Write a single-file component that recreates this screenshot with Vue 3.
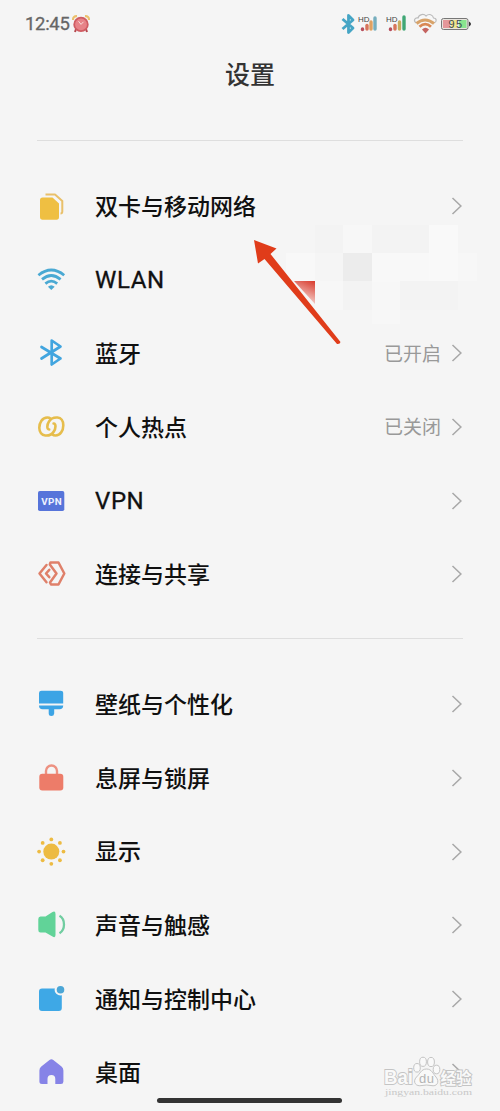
<script setup>
const groups = [
  [
    { icon: 'sim', label: '双卡与移动网络', arrow: true },
    { icon: 'wifi', label: 'WLAN', latin: true },
    { icon: 'bluetooth', label: '蓝牙', value: '已开启', arrow: true },
    { icon: 'hotspot', label: '个人热点', value: '已关闭', arrow: true },
    { icon: 'vpn', label: 'VPN', latin: true, arrow: true },
    { icon: 'share', label: '连接与共享', arrow: true },
  ],
  [
    { icon: 'brush', label: '壁纸与个性化', arrow: true },
    { icon: 'lock', label: '息屏与锁屏', arrow: true },
    { icon: 'sun', label: '显示', arrow: true },
    { icon: 'sound', label: '声音与触感', arrow: true },
    { icon: 'notice', label: '通知与控制中心', arrow: true },
    { icon: 'home', label: '桌面', arrow: true },
  ],
]
const dots = Array.from({ length: 8 }, (_, i) => ({
  x: 16.3 + 12.2 * Math.cos((i * Math.PI) / 4),
  y: 15.6 + 12.2 * Math.sin((i * Math.PI) / 4),
}))
</script>

<template>
  <div class="phone">
    <header class="status">
      <span class="time">12:45</span>
      <svg class="alarm" width="18" height="18" viewBox="0 0 18 18">
        <path d="M1 5 Q1 1 5 1.2 M17 5 Q17 1 13 1.2" stroke="#ecc06c" stroke-width="2.2" fill="none" />
        <path d="M4 14 L3 17 M14 14 L15 17" stroke="#b5484e" stroke-width="2" />
        <circle cx="9" cy="9.4" r="6.8" fill="#e78388" stroke="#cf5c62" stroke-width="1.8" />
        <path d="M6.5 6.2 L9 9.4 L11.5 6.8" stroke="#f8dcd8" stroke-width="1" fill="none" />
      </svg>
      <svg class="tray" width="136" height="24" viewBox="0 0 136 24">
        <path d="M2.5 7 L13 16 L8.5 20.5 V3.5 L13 8 L2.5 17" fill="none" stroke="#45a5c5" stroke-width="2.8" stroke-linejoin="round" />
        <g font-family="Liberation Sans, sans-serif" font-size="8" fill="#444">
          <text x="18" y="9.5" textLength="11.500" lengthAdjust="spacingAndGlyphs">HD</text>
          <text x="46" y="9.5" textLength="11.500" lengthAdjust="spacingAndGlyphs">HD</text>
        </g>
        <g stroke-width="3.400" stroke-linecap="round">
          <path d="M22.500 17.5 V17" stroke="#b84e5c" />
          <path d="M27 13.5 V17" stroke="#d8765b" />
          <path d="M31 10 V17" stroke="#e0a161" />
          <path d="M35 6 V17" stroke="#76aebe" />
          <path d="M50.500 17.5 V17" stroke="#b84e5c" />
          <path d="M55 13.5 V17" stroke="#d8765b" />
          <path d="M59.500 10 V17" stroke="#c9ac5d" />
          <path d="M64 5 V17" stroke="#40a775" />
        </g>
        <path d="M76 11 C73 8 75 5.500 78 6 C79 2 84 1.500 86 4 C89 1 93 3 93.500 6 C97 6 97 10 94 11" fill="#f7f7f7" stroke="#bbb" stroke-width="1.2" />
        <path d="M76.500 11.500 Q85 4.500 94 11.500" fill="none" stroke="#d8a36a" stroke-width="3" />
        <path d="M79.500 14.800 Q85.300 9.500 91 14.800" fill="none" stroke="#d98855" stroke-width="2.800" />
        <path d="M82 17.500 Q85.500 14 89 17.500 L85.500 21.500 Z" fill="#c46360" />
        <rect x="101.500" y="6.500" width="26.500" height="11" rx="2" fill="#e8e5df" stroke="#777" stroke-width="1" />
        <rect x="103" y="8" width="7" height="8" fill="#e4979a" />
        <rect x="111" y="8" width="6" height="8" fill="#f0e28a" />
        <rect x="119" y="8" width="7.500" height="8" fill="#89e58e" />
        <path d="M129 9.500 Q133 12 129 14.500 Z" fill="#333" />
        <text x="108.500" y="15.900" textLength="13.500" font-family="Liberation Sans, sans-serif" font-size="11" fill="#3c494e">95</text>
      </svg>
    </header>
    <h1 class="title">设置</h1>

    <section v-for="(group, g) in groups" :key="g" class="group">
      <div v-for="item in group" :key="item.label" class="row">
        <svg class="icon" width="32" height="32" viewBox="0 0 32 32">
          <g v-if="item.icon === 'sim'">
            <path d="M10.500 4.400 H20 L27.300 11 V21.500 Q27.300 23.500 25.500 23.500" fill="none" stroke="#e9c06a" stroke-width="2" stroke-linejoin="round" />
            <path d="M7.500 7.500 H17.500 L24 13.500 V27 Q24 29.700 21.500 29.700 H7.500 Q5 29.700 5 27 V10 Q5 7.500 7.500 7.500 Z" fill="#efbf42" />
          </g>
          <g v-else-if="item.icon === 'wifi'" fill="none" stroke="#4aa9d3" stroke-width="2.700">
            <path d="M3.400 11.200 Q16.300 0.800 29.200 11.200" />
            <path d="M7 15.400 Q16.300 7.600 25.600 15.400" />
            <path d="M10.400 19.600 Q16.300 14.600 22.200 19.600" />
            <path d="M12.900 22.800 Q16.300 19.800 19.700 22.800 L16.300 26 Z" fill="#4aa9d3" stroke="none" />
          </g>
          <path v-else-if="item.icon === 'bluetooth'" d="M6.500 10 L25.500 21.500 L16.700 27.500 V3.500 L25.500 9.500 L6.500 21.500" fill="none" stroke="#42a5df" stroke-width="2.700" stroke-linejoin="round" stroke-linecap="round" />
          <g v-else-if="item.icon === 'hotspot'" fill="none" stroke="#e6bd4c" stroke-width="2.600" stroke-linecap="round">
            <path d="M14.200 18.500 C11.500 18.500 12 13.500 14 10.500 C16 7 19.500 6.300 22.500 6.500 C26 6.800 28.300 10 28.300 14.200 C28.300 19.500 25.500 24.500 20.500 24.500 Q18.500 24.500 17.500 23.500" />
            <path d="M18.600 12.500 C21.300 12.500 20.800 17.500 18.800 20.500 C16.800 24 13.300 24.700 10.300 24.500 C6.800 24.200 4.300 21 4.300 16.800 C4.300 11.500 7.300 6.500 12.300 6.500 Q14.300 6.500 15.300 7.500" />
          </g>
          <g v-else-if="item.icon === 'vpn'">
            <rect x="3" y="6" width="26.300" height="20" rx="1.800" fill="#5674da" />
            <text x="6.200" y="19.600" textLength="20.500" font-family="Roboto, sans-serif" font-size="9.800" font-weight="700" fill="#eef2ff">VPN</text>
          </g>
          <g v-else-if="item.icon === 'share'" fill="none" stroke="#df806a" stroke-width="2.500" stroke-linejoin="round" stroke-linecap="round">
            <path d="M11.500 7 L4.500 15.500 L11.500 24.200" />
            <path d="M14.300 11.800 L11 15.500 L14.300 19.200" />
            <path d="M15.500 4.500 H23.500 L29.300 15.500 L23.500 26.500 H16 L15 24.500 L21.500 15.500 L14.800 6.500 Z" />
          </g>
          <g v-else-if="item.icon === 'brush'" fill="#3ca4e5">
            <path d="M6.500 2.700 H25.500 Q28.200 2.700 28.200 5 V15.400 H4 V5 Q4 2.700 6.500 2.700 Z" />
            <path d="M4 17.500 H28.200 Q28.200 21.300 24.500 21.300 H19.200 V25.500 Q19 28 16.400 28 Q13.800 28 13.700 25.500 V21.300 H7.500 Q4 21.300 4 17.500 Z" />
          </g>
          <g v-else-if="item.icon === 'lock'">
            <path d="M11 14 V9 A5.500 5.500 0 0 1 22 9 V14" fill="none" stroke="#ed9181" stroke-width="2.400" />
            <rect x="4.300" y="11.800" width="24" height="16.700" rx="3" fill="#ed7c69" />
          </g>
          <g v-else-if="item.icon === 'sun'" fill="#edbb42">
            <circle cx="16.300" cy="15.600" r="8" />
            <circle v-for="(d, i) in dots" :key="i" :cx="d.x" :cy="d.y" r="1.900" />
          </g>
          <g v-else-if="item.icon === 'sound'">
            <path d="M5.500 7.500 H10.500 L17.500 3 Q20.500 1.500 20.500 5 V26 Q20.500 29.300 17.500 27.500 L10.500 23.500 H5.500 Q3.300 23.500 3.300 21 V10 Q3.300 7.500 5.500 7.500 Z" fill="#61d398" />
            <path d="M24.500 6.800 Q29 9.500 29 15.500 Q29 21.500 24.500 24.300" fill="none" stroke="#70cda0" stroke-width="2.300" />
          </g>
          <g v-else-if="item.icon === 'notice'">
            <rect x="4" y="5.500" width="22.800" height="22.400" rx="3" fill="#3ea8e6" />
            <circle cx="25.500" cy="6.700" r="5.900" fill="#f5f5f5" />
            <circle cx="25.500" cy="6.700" r="3.800" fill="#4ba6d6" />
          </g>
          <path v-else d="M14.500 4 Q16.400 2.700 18.300 4 L26.500 10.500 Q28.400 12 28.400 14.500 V25.500 Q28.400 28 26 28 H20.300 V23 A3.900 3.900 0 0 0 12.500 23 V28 H7 Q4.400 28 4.400 25.500 V14.500 Q4.400 12 6.300 10.500 Z" fill="#8683e7" />
        </svg>
        <span class="label" :class="{ latin: item.latin }">{{ item.label }}</span>
        <span v-if="item.value" class="value">{{ item.value }}</span>
        <svg v-if="item.arrow" class="chevron" width="12" height="20" viewBox="0 0 12 20">
          <path d="M1.500 2 L9.900 10 L1.500 18" fill="none" stroke="#a8a8a8" stroke-width="1.500" />
        </svg>
      </div>
    </section>

    <svg class="mosaic" width="220" height="110" viewBox="0 0 220 110">
      <defs>
        <linearGradient id="red" x1="1" y1="0" x2="0.600" y2="1">
          <stop offset="0" stop-color="#d8392b" />
          <stop offset="1" stop-color="#f7dcd8" />
        </linearGradient>
      </defs>
      <rect x="55" y="5" width="28" height="28" fill="#f3f3f3" />
      <rect x="83" y="5" width="29" height="28" fill="#f7f7f7" />
      <rect x="112" y="5" width="57" height="28" fill="#f3f3f3" />
      <rect x="169" y="5" width="29" height="57" fill="#f9f9f9" />
      <rect x="26" y="33" width="29" height="29" fill="#f8f8f8" />
      <rect x="83" y="33" width="29" height="28" fill="#ececec" />
      <rect x="112" y="33" width="57" height="29" fill="#f8f8f8" />
      <rect x="198" y="33" width="19" height="28" fill="#f7f7f7" />
      <rect x="55" y="61" width="28" height="29" fill="#f7f7f7" />
      <rect x="83" y="61" width="29" height="29" fill="#f3f3f3" />
      <rect x="112" y="62" width="28" height="42" fill="#f7f7f7" />
      <rect x="140" y="61" width="58" height="29" fill="#f3f3f3" />
      <path d="M34 61 H55 V84 Z" fill="url(#red)" />
    </svg>
    <svg class="pointer" width="90" height="108" viewBox="0 0 90 108">
      <path d="M4 0 L26.500 8.500 L20.500 14 L90.500 102 Q90 104.500 87 104 L14.500 19 L8 23.500 Z" fill="#e03c1a" />
    </svg>
    <svg class="brand" width="96" height="50" viewBox="0 0 96 50">
      <g fill="#f9f9f9" stroke="#c4c4c4" stroke-width="1">
        <text x="4" y="29" font-size="20" font-family="Liberation Sans, sans-serif" font-weight="700" paint-order="stroke" stroke-width="1.800" textLength="29" lengthAdjust="spacingAndGlyphs">Bai</text>
        <path d="M46.500 14 C41 14 40 19 36.500 22 C32 27 36 32 42 30.500 Q46.500 29.500 51 30.500 C57 32 60 27 56 22 C53 19 52 14 46.500 14 Z" />
        <ellipse cx="37" cy="12.800" rx="3.300" ry="4.300" />
        <ellipse cx="43" cy="6.800" rx="3.400" ry="4.600" />
        <ellipse cx="51" cy="7" rx="3.400" ry="4.600" />
        <ellipse cx="56.500" cy="14.500" rx="3.300" ry="4.300" />
        <text x="39" y="27.500" font-size="13" font-family="Liberation Sans, sans-serif" textLength="15" fill="#b4b4b4" stroke="none">du</text>
        <text x="60.500" y="29" font-size="15.500" font-family="Noto Sans CJK SC, sans-serif" font-weight="700" paint-order="stroke" stroke-width="1.800" textLength="31">经验</text>
      </g>
      <text x="5" y="40" font-size="8.500" font-family="Liberation Serif, serif" textLength="87" lengthAdjust="spacingAndGlyphs" fill="#c8c8c8">jingyan.baidu.com</text>
    </svg>
    <div class="homebar"></div>
  </div>
</template>

<style>
body { background: #f5f5f5; }
</style>
<style scoped>
.phone {
  position: relative;
  box-sizing: border-box;
  width: 500px;
  height: 1111px;
  overflow: hidden;
  background: #f5f5f5;
  font-family: "Noto Sans CJK SC", sans-serif;
  color: #101010;
}
.status { display: flex; align-items: center; height: 48px; padding: 0 24px 0 25px; }
.time { width: 45px; font: 400 18.5px/24px Roboto, sans-serif; color: #666; letter-spacing: -0.3px; -webkit-text-stroke: 0.3px #666; }
.alarm { margin-left: 2px; }
.tray { margin-left: auto; }
.title { margin: 0; height: 92px; font-size: 25px; line-height: 51px; font-weight: 500; text-align: center; color: #333; }
.group { margin: 0 37px; padding: 28.4px 0 27.2px; border-top: 1px solid #dedede; }
.row { display: flex; align-items: center; height: 73.6px; margin-left: -2px; }
.icon { flex: none; }
.label { margin-left: 28px; flex: 1; padding-bottom: 2.4px; font-size: 23px; line-height: 32px; font-weight: 500; white-space: nowrap; }
.latin { padding-bottom: 0; font-family: Roboto, sans-serif; font-size: 24px; font-weight: 400; letter-spacing: 0.6px; -webkit-text-stroke: 0.3px #101010; }
.value { margin-right: 10px; padding-bottom: 1px; font-size: 19px; line-height: 28px; color: #999; }
.chevron { flex: none; }
.mosaic { position: absolute; left: 260px; top: 220px; }
.pointer { position: absolute; left: 250px; top: 240px; overflow: visible; }
.brand { position: absolute; left: 380px; top: 1055px; }
.homebar { position: absolute; left: 157px; top: 1098px; width: 185px; height: 5px; border-radius: 3px; background: #333; }
</style>
